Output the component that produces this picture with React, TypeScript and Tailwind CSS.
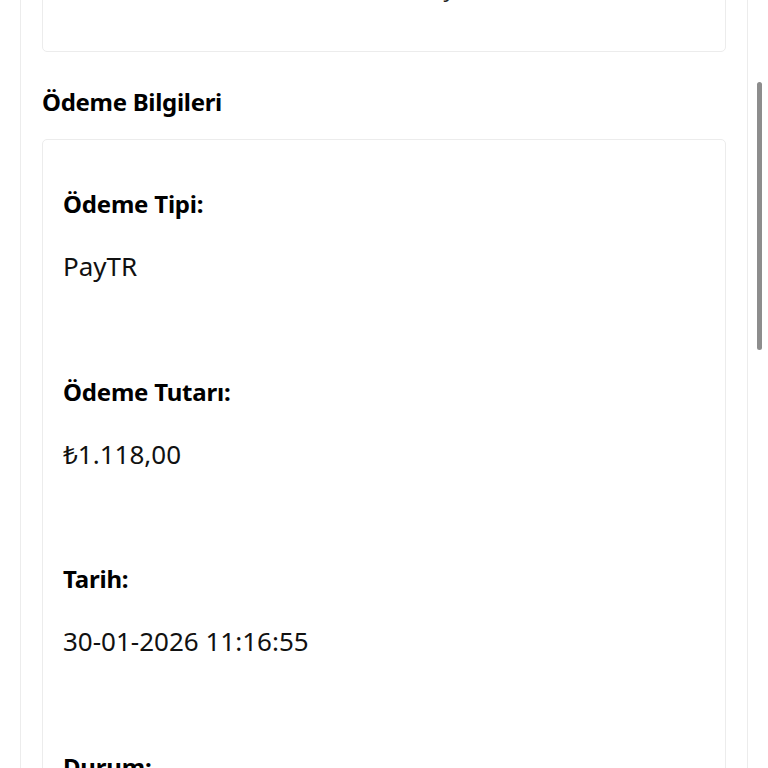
import React from "react";

const items = [
  { label: "Ödeme Tipi:", value: "PayTR" },
  { label: "Ödeme Tutarı:", value: "₺1.118,00" },
  { label: "Tarih:", value: "30-01-2026 11:16:55" },
  { label: "Durum:", value: "Başarılı" },
];

export default function App() {
  return (
    <div
      className="relative w-[768px] h-[768px] overflow-hidden bg-white text-black"
      style={{ fontFamily: '"Noto Sans", "Open Sans", sans-serif' }}
    >
      <div className="mx-5 border-x border-[#ececec] px-[21px] -mt-[100px]">
        <div className="h-[152px] rounded-[5px] border border-[#ececec] pt-[67px]">
          <p className="ml-[360px] text-[22px] leading-[40px] text-[#222]">Konya, TR</p>
        </div>
        <h2 className="mt-[34px] text-[24px] font-bold leading-[32px] tracking-[-0.3px]">Ödeme Bilgileri</h2>
        <div className="mt-[21px] rounded-[5px] border border-[#ececec] px-[20px] pt-[48px] pb-[60px]">
          {items.map((it, i) => (
            <div key={i} className={i === 0 ? "" : "mt-[93.5px]"}>
              <div className="text-[24px] font-bold leading-[32px] tracking-[-0.2px]">{it.label}</div>
              <div className="mt-[30px] text-[26px] leading-[32px] text-[#111]">{it.value}</div>
            </div>
          ))}
        </div>
      </div>
      <div className="absolute right-[6px] top-[82px] h-[268px] w-[5px] rounded-full bg-[#8d8d8d]" />
    </div>
  );
}
